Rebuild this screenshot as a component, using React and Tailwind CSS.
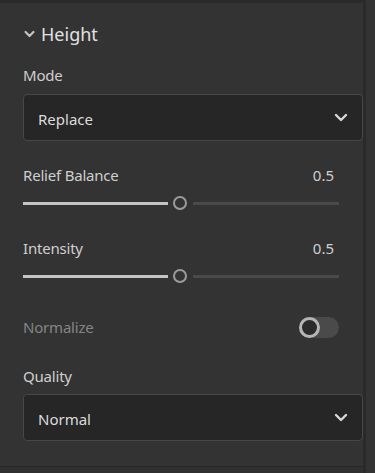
import React from "react";

const font = { fontFamily: '"Noto Sans", "Open Sans", sans-serif' };

function Chevron({ className = "", sw = "2.4" }) {
  return (
    <svg viewBox="0 0 14 9" className={className} fill="none" stroke="currentColor" strokeWidth={sw} strokeLinecap="round" strokeLinejoin="round">
      <path d="M2 2 L7 7 L12 2" />
    </svg>
  );
}

function Select({ value }) {
  return (
    <div className="h-[47px] w-[340px] rounded-[4px] border border-[#474747] bg-[#262626] flex items-center justify-between pl-[14px] pr-[14px]">
      <span className="text-[15px] text-[#dcdcdc] pt-[3px]">{value}</span>
      <Chevron className="w-[14px] h-[9px] text-[#d8d8d8]" />
    </div>
  );
}

function Slider() {
  return (
    <div className="h-[14px] w-[316px] flex items-center">
      <div className="h-[3px] w-[145px] bg-[#c4c4c4]" />
      <div className="ml-[5px] w-[14px] h-[14px] rounded-full border-[2.5px] border-[#9c9c9c]" />
      <div className="ml-[6px] h-[3px] flex-1 bg-[#4a4a4a]" />
    </div>
  );
}

function LabelRow({ label, value, muted }) {
  return (
    <div className="h-[20px] w-[311px] flex items-center justify-between">
      <span className={`text-[15px] tracking-[-0.2px] ${muted ? "text-[#8a8a8a]" : "text-[#cfcfcf]"}`}>{label}</span>
      {value && <span className="text-[15px] text-[#cfcfcf]">{value}</span>}
    </div>
  );
}

export default function App() {
  return (
    <div className="w-[375px] h-[473px] bg-[#333333] flex overflow-hidden" style={font}>
      <div className="w-[363px] flex flex-col">
        <div className="h-[3px] bg-[#2a2a2a]" />
        <div className="pl-[23px] flex flex-col">
          <div className="h-[62px] flex items-center">
            <Chevron className="w-[11px] h-[8px] text-[#c4c4c4] ml-[1px]" sw="2.8" />
            <span className="ml-[6px] text-[18px] text-[#e2e2e2]">Height</span>
          </div>
          <LabelRow label="Mode" />
          <div className="mt-[9px]"><Select value="Replace" /></div>
          <div className="mt-[24px]"><LabelRow label="Relief Balance" value="0.5" /></div>
          <div className="mt-[11px]"><Slider /></div>
          <div className="mt-[28px]"><LabelRow label="Intensity" value="0.5" /></div>
          <div className="mt-[11px]"><Slider /></div>
          <div className="mt-[33px] h-[22px] w-[316px] flex items-center justify-between">
            <span className="text-[15px] text-[#858585] tracking-[-0.2px]">Normalize</span>
            <div className="w-[40px] h-[21px] rounded-full bg-[#4a4a4a] relative">
              <div className="absolute left-0 top-0 w-[21px] h-[21px] rounded-full border-[3px] border-[#b5b5b5] bg-[#2b2b2b]" />
            </div>
          </div>
          <div className="mt-[28px]"><LabelRow label="Quality" /></div>
          <div className="mt-[8px]"><Select value="Normal" /></div>
        </div>
        <div className="mt-[25px] h-[1px] bg-[#262626]" />
        <div className="flex-1 bg-[#303030]" />
      </div>
      <div className="w-[3px] bg-[#2a2a2a]" />
      <div className="flex-1 bg-[#333333]" />
    </div>
  );
}
